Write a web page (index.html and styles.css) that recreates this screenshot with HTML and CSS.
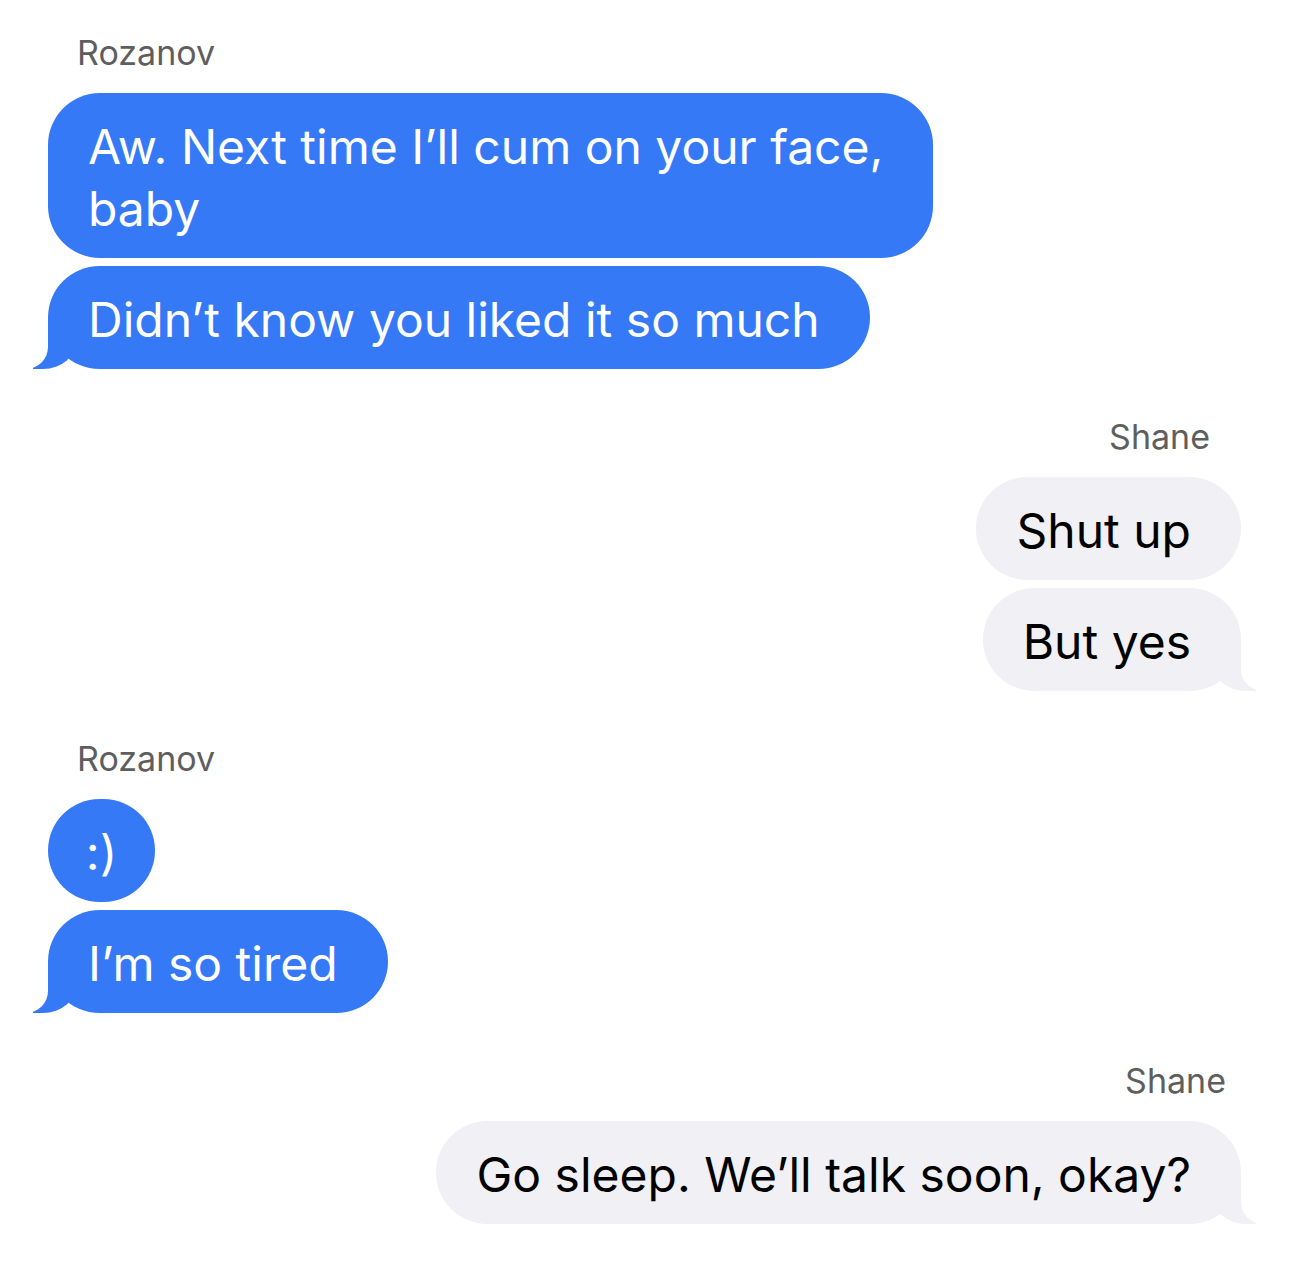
FILE: index.html
```html
<!DOCTYPE html>
<html lang="en">
<head>
<meta charset="UTF-8" />
<title>Messages</title>
<link rel="stylesheet" href="styles.css">
</head>
<body>

<div class="thread">

    <div class="group them">
        <div class="sender">Rozanov</div>
        <div class="bubble">Aw. Next time I’ll cum on your face,<br>baby</div>
        <div class="bubble tail">Didn’t know you liked it so much</div>
    </div>

    <div class="group me">
        <div class="sender">Shane</div>
        <div class="bubble">Shut up</div>
        <div class="bubble tail">But yes</div>
    </div>

    <div class="group them">
        <div class="sender">Rozanov</div>
        <div class="bubble emoji">:)</div>
        <div class="bubble tail">I’m so tired</div>
    </div>

    <div class="group me last">
        <div class="sender">Shane</div>
        <div class="bubble tail">Go sleep. We’ll talk soon, okay?</div>
    </div>

</div>

</body>
</html>
```

FILE: styles.css
```css
body {
    margin: 0;
    padding: 0;
    background-color: #ffffff;
    font-family: Inter, "Noto Sans", sans-serif;
}

.thread {
    padding: 33px 48px 40px 48px;
    display: flex;
    flex-direction: column;
    gap: 48px;
}

.group {
    display: flex;
    flex-direction: column;
    gap: 8px;
}

.group.them {
    align-items: flex-start;
}

.group.me {
    align-items: flex-end;
}

.sender {
    font-size: 34px;
    line-height: 40px;
    color: #5e5e5e;
    margin-bottom: 12px;
}

.them .sender {
    margin-left: 29px;
}

.me .sender {
    margin-right: 31px;
}

.me.last .sender {
    margin-right: 15px;
}

.bubble {
    position: relative;
    z-index: 0;
    max-width: 830px;
    padding: 23px 50px 18px 40px;
    border-radius: 52px;
    font-size: 48px;
    line-height: 62px;
}

.them .bubble {
    background-color: #3579f6;
    color: #ffffff;
}

.me .bubble {
    background-color: #f0f0f5;
    color: #000000;
}

.bubble.emoji {
    width: 107px;
    padding-left: 0;
    padding-right: 0;
    text-align: center;
}

/* tail */
.bubble.tail::before,
.bubble.tail::after {
    content: "";
    position: absolute;
    bottom: 0;
    height: 50px;
    z-index: -1;
}

.them .bubble.tail::before {
    left: -15px;
    width: 44px;
    background-color: #3579f6;
    border-bottom-right-radius: 34px 30px;
}

.them .bubble.tail::after {
    left: -56px;
    width: 56px;
    background-color: #ffffff;
    border-bottom-right-radius: 22px;
}

.me .bubble.tail::before {
    right: -15px;
    width: 44px;
    background-color: #f0f0f5;
    border-bottom-left-radius: 34px 30px;
}

.me .bubble.tail::after {
    right: -56px;
    width: 56px;
    background-color: #ffffff;
    border-bottom-left-radius: 22px;
}
```
